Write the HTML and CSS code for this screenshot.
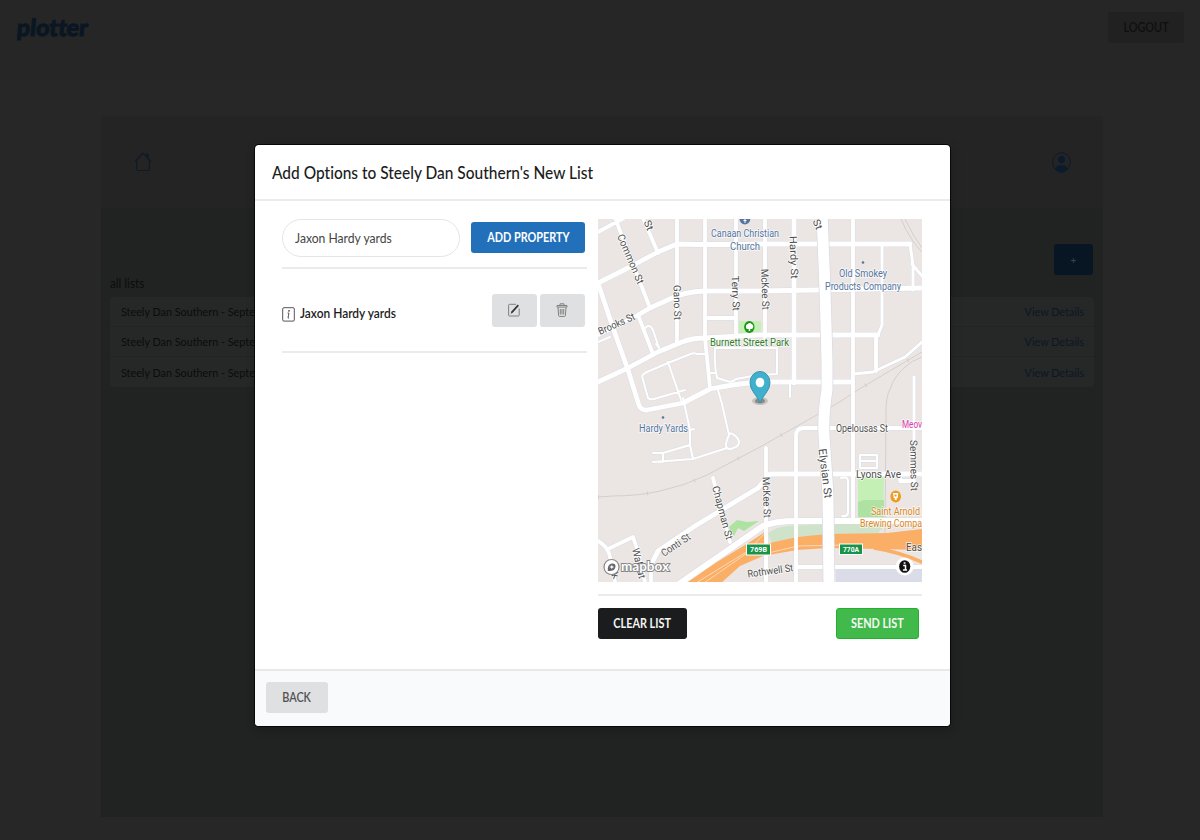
FILE: index.html
```html
<!DOCTYPE html>
<html lang="en">
<head>
<meta charset="utf-8">
<title>plotter</title>
<link rel="stylesheet" href="styles.css">
</head>
<body>
<header class="topbar">
  <div class="logo"><span class="logo-text">plotter</span></div>
  <button class="btn logout"><span class="t">LOGOUT</span></button>
</header>
<main class="panel">
  <nav class="panel-nav">
    <svg class="home" viewBox="0 0 18 20"><path d="M1 9.500 9 1.200l8 8.300M2.600 8.500v8.800q0 1.200 1.200 1.200h10.400q1.200 0 1.200-1.200V8.500M12.600 4.500V2h1.500v4"/></svg>
    <svg class="user" viewBox="0 0 19 21"><ellipse class="ring" cx="9.500" cy="10.500" rx="8.800" ry="9.800"/><ellipse cx="9.500" cy="7.600" rx="3.500" ry="3.800"/><path d="M3.200 16.400Q5 13.300 7.500 13.300h4q2.500 0 4.300 3.100Q13.200 19.800 9.500 19.800T3.200 16.400Z"/></svg>
  </nav>
  <section class="lists">
    <button class="btn plus">+</button>
    <h2 class="lists-title"><span class="t">all lists</span></h2>
    <div class="rows">
      <div class="row"><span class="t">Steely Dan Southern - September</span><a class="t">View Details</a></div>
      <div class="row"><span class="t">Steely Dan Southern - September</span><a class="t">View Details</a></div>
      <div class="row"><span class="t">Steely Dan Southern - September</span><a class="t">View Details</a></div>
    </div>
  </section>
</main>

<div class="modal">
  <div class="modal-head"><h1 class="t">Add Options to Steely Dan Southern's New List</h1></div>
  <div class="modal-body">
    <div class="left">
      <div class="form">
        <div class="field"><span class="t">Jaxon Hardy yards</span></div>
        <button class="btn blue"><span class="t">ADD PROPERTY</span></button>
      </div>
      <div class="item">
        <svg class="info" viewBox="0 0 13 15"><rect x=".7" y=".7" width="11.600" height="13.400" rx="1.200"/><path d="M5.600 6h1.300l-.9 5h1"/><circle cx="7" cy="3.900" r=".8"/></svg>
        <span class="item-name"><span class="t">Jaxon Hardy yards</span></span>
        <button class="btn tool"><svg width="12" height="14" viewBox="0 0 12 14"><path class="thin" d="M8 1.300H1.500q-.9 0-.9.900v9.900q0 .9.900.9h8.800q.900 0 .900-.900V5.500"/><path class="solid" d="m9.700 1.500 1.200 1.300-6.200 7-2 .9.700-2.300z"/></svg></button>
        <button class="btn tool"><svg width="12" height="14" viewBox="0 0 12 14"><path class="thin" d="M1 2.500h10v1.600H1zM4 2.300V.8h4v1.500M2 4.300l.6 8.200q0 .9.900.900h5q.900 0 .900-.900L10 4.300M4.300 6v5.500M6 6v5.500M7.700 6v5.500"/></svg></button>
      </div>
    </div>
    <div class="right">
      <svg class="map" viewBox="598 219 324 363">
        <rect class="land" x="598" y="219" width="324" height="363"/>
        <path class="zone" d="M836 566h86v16h-86z"/>
        <path class="park" d="M739 321h22v13h-22zM858 477h26l-1 40h-25z"/>
        <path class="park dark" d="m729 527 8-7 10 2 12-1-15 10-6-3-4 8-4-5z"/>
        <path class="park dark" d="M858 502l6-2h20v17h-26z"/>
        <g class="rail">
          <path d="M598 497l14-1q26 0 48-5 24-5 47-16l53-28 78-44 23-15 61-36M901 219q9 21 21 33"/>
          <path d="M905 219q8 17 17 29M922 357q-11 4-17 10-11 10-14 20-6 10-5 30l-1 116"/>
          <path class="ties" d="M598 497l14-1q26 0 48-5 24-5 47-16l53-28 78-44 23-15 61-36"/>
        </g>
        <defs>
          <g id="minor">
            <path d="M642 376q1-2 5-4l21-9 20-8q6-3 9-1h8M642 376l6 22q2 2 6 1l31-9M668 362l13 38M715 348h62v26l-19 1-22 4q-4 4-9 2l-10-3q-3-13-2-30M645 328q5-5 8 2l6 18-3-4M709 373h6M718 390l4 14 7 31q-6 13 0 14 13-2 9-10-3-5-9-6M727 448l-34 11-40 3M683 398l7 32v15l3 14M690 445l-27 8h-10M663 453v9M690 430l4-1M598 342l12-5M860 455h17v13h-17zM860 461h17M841 478q7-2 7 3v32q-1 4-6 3M790 383v14"/>
          </g>
          <g id="street">
            <path d="M615 218l35 90M643 218l15 35M598 232l26-14M638 315l15 39M677 218v126M705 218v120l5 50M736 218v118M707 318h29M765 218v120M853 218v304M876 335v36M598 335l40-20M766 448v134M713 478l17 64M608 549l25-12 4 12 8 33M598 541q10 5 12 16l5 25M651 562v20M796 582V436q0-8 8-8h118M796 567h126M900 474v7h14"/>
          </g>
          <g id="side">
            <path d="M882 245v80l-4 10M853 374l20-2 32-15 17-15M910 244l3 21v25M912 264l10 12M914 377v105"/>
          </g>
          <g id="main">
            <path d="M598 283l30-15 30-16 19-8q40 1 83 0h150M598 283l14 42 16 45 10 32q2 9 9 8l36-7 27-14q25-5 48-7h95M638 315l12-7 22-10q12-6 33-7h57l160-3M598 382l30-14 30-16 24-10q10-4 23-4l53-3h120M794 218v165M653 561l5-10 37-25 63-38 12-14h152"/>
          </g>
          <g id="front">
            <path d="M676 586l87-60q12-5 33-5h126"/>
          </g>
          <path id="elysian" d="M822 212l3 78 2 70v30q-4 24-3 45l4 60 1 95"/>
        </defs>
        <use href="#minor" class="case-s"/><use href="#side" class="case-n"/><use href="#street" class="case-m"/><use href="#main" class="case-l"/><use href="#front" class="case-f"/>
        <use href="#minor" class="road-s"/><use href="#side" class="road-n"/><use href="#street" class="road-m"/><use href="#main" class="road-l"/>
        <path class="strip" d="M768 534q6-7 20-8l40-2h58l-8 9-51 2-30 2-25 6z"/>
        <path class="motor" d="M685 584l32-22 28-17 20-13v12l32-7 30-3 60-1 35-4v21l-42-1-53-1-30 2-34 6-23 10-20 18z"/>
        <path class="motor-line" d="M874 548q26 4 50 15"/>
        <path class="motor-gap" d="M696 583l52-32 17-18M704 583l46-32M768 553l30-7 48-1"/>
        <use href="#front" class="road-f"/>
        <path class="road-m" d="M766 525v57M796 520v62"/>
        <use href="#elysian" class="case-x"/><use href="#elysian" class="road-x"/>
        <g class="lbl">
          <text lengthAdjust="spacingAndGlyphs" transform="translate(617 236) rotate(67)" textLength="53">Common St</text>
          <text lengthAdjust="spacingAndGlyphs" transform="translate(643.500 222) rotate(67)" textLength="10">St</text>
          <text lengthAdjust="spacingAndGlyphs" transform="translate(673.500 285) rotate(89)" textLength="35">Gano St</text>
          <text lengthAdjust="spacingAndGlyphs" transform="translate(731.500 276) rotate(88)" textLength="35">Terry St</text>
          <text lengthAdjust="spacingAndGlyphs" transform="translate(761 269) rotate(88)" textLength="41">McKee St</text>
          <text lengthAdjust="spacingAndGlyphs" transform="translate(789.500 236) rotate(88)" textLength="43">Hardy St</text>
          <text lengthAdjust="spacingAndGlyphs" transform="translate(812.500 221) rotate(68)" textLength="10">St</text>
          <text lengthAdjust="spacingAndGlyphs" transform="translate(600 335) rotate(-24)" textLength="39">Brooks St</text>
          <text lengthAdjust="spacingAndGlyphs" transform="translate(762.500 477) rotate(88)" textLength="41">McKee St</text>
          <text lengthAdjust="spacingAndGlyphs" transform="translate(712 487) rotate(75)" textLength="55">Chapman St</text>
          <text lengthAdjust="spacingAndGlyphs" transform="translate(664 557) rotate(-34)" textLength="33">Conti St</text>
          <text lengthAdjust="spacingAndGlyphs" transform="translate(632 549) rotate(77)" textLength="31">Walnut</text>
          <text transform="translate(611 575) rotate(60)">k</text>
          <text lengthAdjust="spacingAndGlyphs" class="big" transform="translate(818.500 449) rotate(83)" textLength="50">Elysian St</text>
          <text lengthAdjust="spacingAndGlyphs" transform="translate(910 440) rotate(89)" textLength="51">Semmes St</text>
          <text lengthAdjust="spacingAndGlyphs" x="836" y="431.500" textLength="52">Opelousas St</text>
          <text lengthAdjust="spacingAndGlyphs" class="big" x="856" y="477.500" textLength="45">Lyons Ave</text>
          <text lengthAdjust="spacingAndGlyphs" class="big" x="906" y="551" textLength="16">Eas</text>
          <text lengthAdjust="spacingAndGlyphs" transform="translate(748 577.500) rotate(-8)" textLength="46">Rothwell St</text>
          <g class="poi">
            <text lengthAdjust="spacingAndGlyphs" x="711" y="237" textLength="68">Canaan Christian</text><text lengthAdjust="spacingAndGlyphs" x="730" y="249.500" textLength="30">Church</text>
            <text lengthAdjust="spacingAndGlyphs" x="839" y="277" textLength="48">Old Smokey</text><text lengthAdjust="spacingAndGlyphs" x="825" y="289.500" textLength="76">Products Company</text>
            <text lengthAdjust="spacingAndGlyphs" x="639" y="432" textLength="49">Hardy Yards</text>
          </g>
          <text lengthAdjust="spacingAndGlyphs" class="green" x="710" y="345.500" textLength="79">Burnett Street Park</text>
          <text lengthAdjust="spacingAndGlyphs" class="orange" x="871" y="514.500" textLength="49">Saint Arnold</text><text lengthAdjust="spacingAndGlyphs" class="orange" x="860" y="527" textLength="62">Brewing Compa</text>
          <text lengthAdjust="spacingAndGlyphs" class="pink" x="902" y="428" textLength="20">Meov</text>
        </g>
        <g fill="#5375a0"><circle cx="863" cy="262.500" r="1.300"/><circle cx="663" cy="417.500" r="1.300"/><path d="M739.500 219a5.400 5.400 0 0 0 10.800 0z"/></g>
        <path d="M745 219v4M743.500 220.500h3" stroke="#fff"/>
        <ellipse cx="749.300" cy="327" rx="5.200" ry="6" fill="#1c9819"/><path d="M746.700 329q-2-4 1-5 2-2 4 0 3 2 .5 5h-2v2h-1.500v-2z" fill="#fff"/>
        <ellipse cx="895.700" cy="496.500" rx="5.300" ry="6" fill="#ee9c20"/><path d="M893 493h5.300l-.6 5h-1v2h-2v-2h-1z" fill="#fff"/><path d="M894.500 494.500h2v2h-2z" fill="#ee9c20"/>
        <g class="shield"><rect x="746.500" y="544" width="24" height="11"/><rect x="839.500" y="544" width="23" height="10.500"/><text lengthAdjust="spacingAndGlyphs" x="750" y="552.300" textLength="17">769B</text><text lengthAdjust="spacingAndGlyphs" x="843" y="552.200" textLength="16">770A</text></g>
        <ellipse cx="760" cy="401" rx="8" ry="4" fill="#333" opacity=".2"/><ellipse cx="760" cy="401" rx="5" ry="2.500" fill="#333" opacity=".4"/>
        <path d="M760 403q-2-5-6-10-4-5-4-10.500a10 11 0 0 1 20 0q0 5.500-4 10.500-4 5-6 10z" fill="#3fb1ce" stroke="#3894ad"/>
        <ellipse cx="760" cy="382.500" rx="4.300" ry="4.800" fill="#fff"/>
        <circle cx="611.500" cy="567" r="7.500" fill="#fff" stroke="#888" stroke-width="1.200"/><path d="M607.800 571q-.5-7 4-7.500 4-.2 3.700 3.300-.5 4.700-7.700 4.200z" fill="#666"/><path d="m611.800 564.700.7 1.600 1.700.7-1.700.7-.7 1.600-.7-1.600-1.700-.7 1.700-.7z" fill="#fff"/>
        <text class="mapbox" x="621" y="571" textLength="48" lengthAdjust="spacingAndGlyphs">mapbox</text>
        <circle cx="904.700" cy="566.500" r="9" fill="#fff"/><ellipse cx="904.700" cy="566.500" rx="5.600" ry="6.300" fill="#111"/><path d="M903.200 565.500h2.300v4M902.900 570h4.200M903.700 563h1.800" stroke="#fff" stroke-width="1.500" fill="none"/>
      </svg>
      <div class="actions">
        <button class="btn black"><span class="t">CLEAR LIST</span></button>
        <button class="btn send"><span class="t">SEND LIST</span></button>
      </div>
    </div>
  </div>
  <div class="modal-foot"><button class="btn back"><span class="t">BACK</span></button></div>
</div>
</body>
</html>
```

FILE: styles.css
```css
* { box-sizing: border-box; }
body { margin: 0; width: 1200px; height: 840px; overflow: hidden; position: relative; background: #272727; font-family: Lato, "Liberation Sans", sans-serif; font-size: 13px; color: #0c0c0c; font-variant-ligatures: none; }
.t { display: inline-block; white-space: nowrap; transform: scaleX(.9); transform-origin: left center; }
.btn { display: flex; align-items: center; justify-content: center; border: 0; border-radius: 3px; padding: 0; font-family: inherit; font-size: 12.500px; font-weight: 700; line-height: 16px; }
.btn .t { transform: scaleX(.87); transform-origin: center; }

.topbar { height: 79px; padding: 12px 16px 0 17px; background: #262626; display: flex; justify-content: space-between; align-items: flex-start; }
.logo { font-size: 23.500px; line-height: 30px; font-weight: 900; color: #0a1723; }
.logo-text { display: inline-block; transform: scaleX(.99) skewX(-5deg); transform-origin: left center; -webkit-text-stroke: 1px #0a1723; }
.logout { width: 76px; height: 31px; background: #212121; color: #0f0f0f; font-weight: 600; }
.panel { margin: 37px 0 0 101px; width: 1002px; height: 701px; background: #202322; }
.panel-nav { height: 92px; padding: 0 32px 0 33px; background: #242424; display: flex; align-items: center; justify-content: space-between; }
.home { width: 18px; height: 20px; fill: none; stroke: #101a25; stroke-width: 1.200; }
.user { width: 19px; height: 21px; fill: #0b1b2c; }
.ring { fill: none; stroke: #0b1b2c; stroke-width: 1; }
.lists { padding: 36px 9px 0; display: flex; flex-direction: column; }
.plus { width: 39px; height: 31px; margin-right: 1px; align-self: flex-end; background: #081523; color: #3a4148; font-size: 10px; }
.lists-title { margin: 1px 0 0; height: 21px; font-size: 13px; line-height: 15px; font-weight: 400; }
.rows { border-radius: 4px; background: #262727; height: 90px; }
.row { height: 30px; padding: 0 10px 0 11px; display: flex; align-items: center; justify-content: space-between; font-size: 12px; border-bottom: 1px solid #222323; }
.row:last-child { border-bottom: 0; }
.row a { color: #0c1724; transform-origin: right center; }

.modal { position: absolute; left: 255px; top: 145px; width: 694.500px; height: 581px; border-radius: 4px; background: #fff; box-shadow: 0 0 0 1px #080808, 1px 3px 9px 2px rgba(0, 0, 0, .15); display: flex; flex-direction: column; overflow: hidden; }
.modal-head { height: 56px; padding-left: 17px; border-bottom: 2px solid #ececec; display: flex; align-items: center; }
.modal-head h1 { margin: 0; font-size: 17px; font-weight: 500; color: #1b1c1d; transform: scaleX(.91); }
.modal-body { height: 468px; padding: 18px 27.500px 0 27px; display: flex; justify-content: space-between; }
.left { width: 305px; }
.form { height: 50px; display: flex; gap: 11px; border-bottom: 2px solid #ebebeb; }
.field { width: 178px; height: 38px; padding-left: 12px; border: 1.500px solid #e4e5e6; border-radius: 19px; display: flex; align-items: center; font-size: 13.500px; color: #444; }
.blue { width: 114px; height: 31px; margin-top: 3px; background: #2370ba; color: #fff; }
.item { height: 84px; padding-right: 2.500px; border-bottom: 2px solid #ebebeb; display: flex; align-items: center; }
.info { width: 13px; height: 15px; margin-top: 8px; fill: none; stroke: #555; stroke-width: 1; }
.info circle { fill: #333; stroke: none; }
.item-name { flex: 1; margin: 6px 0 0 5px; font-weight: 600; font-size: 12.500px; color: #1b1c1d; }
.item-name .t { transform: scaleX(.955); }
.tool { width: 45px; height: 33px; margin-left: 3px; background: #dfe0e1; }
.thin { fill: none; stroke: #808080; stroke-width: 1; }
.solid { fill: #333; }
.right { width: 324px; }
.map { display: block; width: 324px; height: 363px; }
.actions { margin-top: 12px; padding: 12px 3px 0 0; border-top: 2px solid #ebebeb; display: flex; justify-content: space-between; }
.black { width: 89px; height: 31px; background: #1b1c1d; color: #f4f4f4; }
.send { width: 83px; height: 31px; background: #41ba4b; border: 1px solid #21b12e; color: #f4f9f4; }
.modal-foot { height: 57px; padding: 11px; border-top: 2px solid #e8e9ea; background: #f9fafb; }
.back { width: 62px; height: 31px; background: #dfe0e1; color: #505152; font-weight: 600; }

.land { fill: #ebe6e3; }
.zone { fill: #dadde7; }
.strip { fill: #cfe3ca; }
.park { fill: #c5f0b5; }
.park.dark { fill: #aee2a2; }
.rail path { fill: none; stroke: #d3cfcc; stroke-width: 1; }
.rail .ties { stroke-width: 4; stroke-dasharray: 1 48; }
use { fill: none; stroke-linecap: round; stroke-linejoin: round; }
.case-s { stroke: #dcdde5; stroke-width: 3; }
.case-n { stroke: #d9dbe4; stroke-width: 4; }
.case-m { stroke: #d9dbe4; stroke-width: 4.800; }
.case-l { stroke: #d9dbe4; stroke-width: 5.800; }
.case-f { stroke: #d9dbe4; stroke-width: 7; }
.case-x { stroke: #d9dbe4; stroke-width: 12.500; }
.road-s { stroke: #fff; stroke-width: 2; }
.road-n { stroke: #fff; stroke-width: 3; }
.road-m { fill: none; stroke: #fff; stroke-width: 3.800; }
.road-l { stroke: #fff; stroke-width: 4.800; }
.road-f { stroke: #fff; stroke-width: 6; }
.road-x { stroke: #fff; stroke-width: 11; }
.motor { fill: #fbae66; }
.motor-line { fill: none; stroke: #fbae66; stroke-width: 3.500; }
.motor-gap { fill: none; stroke: #fbd9b5; stroke-width: 1; }
.lbl text { font-family: Roboto, sans-serif; font-size: 10.300px; fill: #4f4f4f; stroke: #fff; stroke-width: 1.600; stroke-opacity: .75; paint-order: stroke; }
.lbl .big { font-size: 11px; }
.lbl .poi text { fill: #5375a0; }
.lbl .green { fill: #2e7d2c; }
.lbl .orange { fill: #d98620; }
.lbl .pink { fill: #d93db0; }
.shield rect { fill: #18934a; stroke: #fff; stroke-width: 1; }
.shield text { font: 700 7.500px Roboto, sans-serif; fill: #fff; }
.mapbox { font: 700 14px Lato, sans-serif; fill: #fff; stroke: #888; stroke-width: 2; paint-order: stroke; }
```
